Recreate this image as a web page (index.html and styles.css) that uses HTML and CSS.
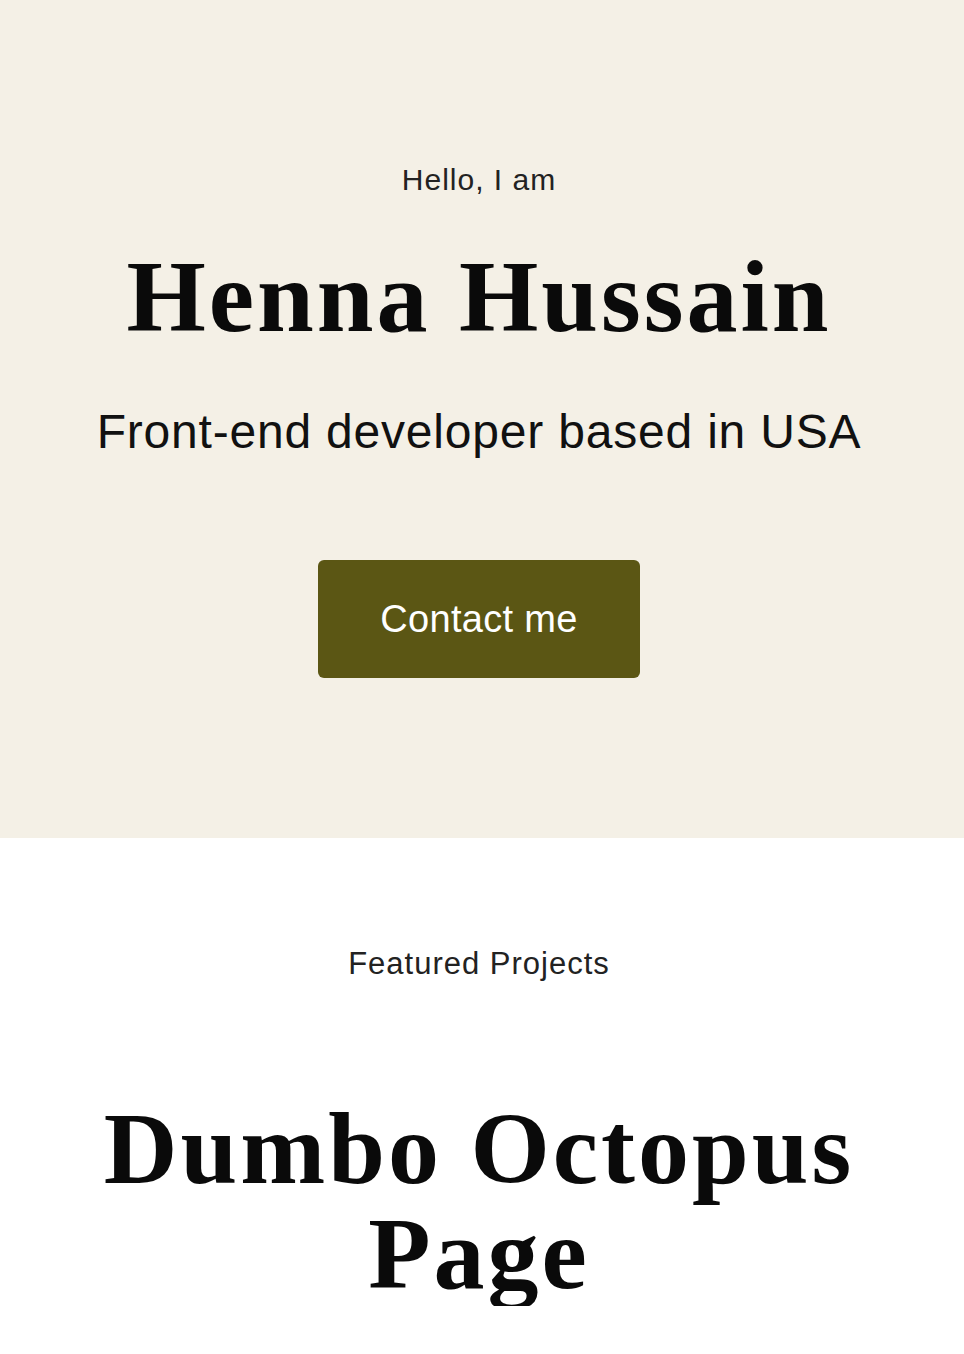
FILE: index.html
```html
<!DOCTYPE html>
<html lang="en">
<head>
<meta charset="utf-8">
<title>Henna Hussain</title>
<link rel="stylesheet" href="styles.css">
</head>
<body>
<header class="hero">
  <p class="hero-intro">Hello, I am</p>
  <h1 class="hero-name">Henna Hussain</h1>
  <p class="hero-role">Front-end developer based in USA</p>
  <a class="btn" href="#contact">Contact me</a>
</header>
<section class="projects">
  <h2 class="projects-label">Featured Projects</h2>
  <h3 class="project-title">Dumbo Octopus Page</h3>
</section>
</body>
</html>
```

FILE: styles.css
```css
* { box-sizing: border-box; }
html, body { margin: 0; padding: 0; }
body {
  font-family: "Liberation Sans", Arial, sans-serif;
  color: #1a1a1a;
  background: #ffffff;
}
.hero {
  background: #f4f0e6;
  height: 838px;
  display: flex;
  flex-direction: column;
  align-items: center;
  text-align: center;
  padding: 160px 6px 0 0;
}
.hero-intro {
  margin: 0;
  font-size: 30px;
  letter-spacing: 1px;
  line-height: 40px;
  color: #222;
}
.hero-name {
  margin: 42px 0 0;
  font-family: "Liberation Serif", "Times New Roman", serif;
  font-weight: 700;
  font-size: 102px;
  letter-spacing: 3px;
  line-height: 110px;
  color: #0a0a0a;
}
.hero-role {
  margin: 50px 0 0;
  font-size: 48px;
  letter-spacing: 0.8px;
  line-height: 60px;
  color: #111;
}
.btn {
  margin-top: 98px;
  width: 322px;
  height: 118px;
  display: flex;
  align-items: center;
  justify-content: center;
  background: #5b5614;
  color: #fff;
  border-radius: 6px;
  text-decoration: none;
  font-size: 38px;
  letter-spacing: 0.3px;
}
.projects {
  display: flex;
  flex-direction: column;
  align-items: center;
  text-align: center;
  padding: 106px 6px 0 0;
}
.projects-label {
  margin: 0;
  font-weight: 400;
  font-size: 31px;
  letter-spacing: 1px;
  line-height: 40px;
  color: #222;
}
.project-title {
  margin: 112px 0 0;
  max-width: 800px;
  font-family: "Liberation Serif", "Times New Roman", serif;
  font-weight: 700;
  font-size: 102px;
  letter-spacing: 3px;
  line-height: 105px;
  color: #0a0a0a;
}
```
